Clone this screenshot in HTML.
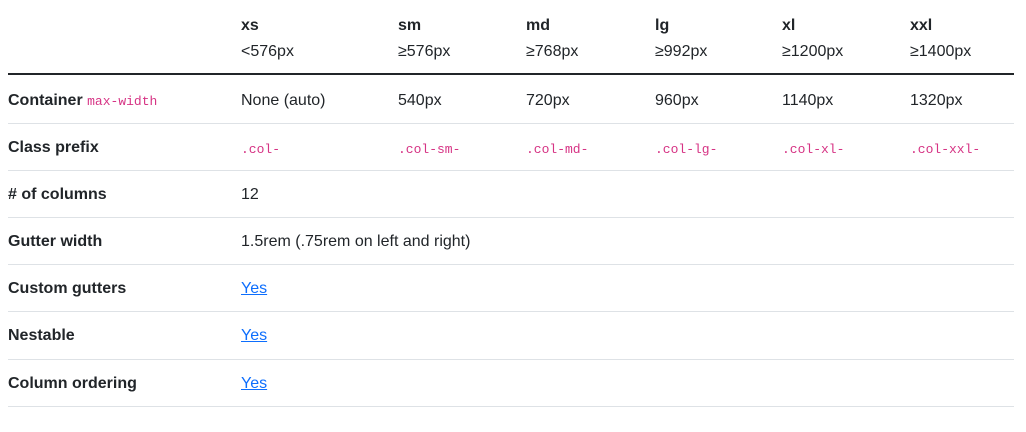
<!DOCTYPE html><html><head><style>
body{margin:0;width:1026px;height:432px;background:#fff;font-family:"Liberation Sans",sans-serif;color:#212529;font-size:16px;position:relative;overflow:hidden}
.t{position:absolute;white-space:nowrap;line-height:20px}
.b{font-weight:bold}
code{font-family:"Liberation Mono",monospace;color:#d63384;font-size:13px}
a{color:#0d6efd;text-decoration:underline}
.l{position:absolute;left:8px;width:1006px;height:1px;background:#dee2e6}
</style></head><body>
<div style="position:absolute;left:8px;top:73px;width:1006px;height:2px;background:#212529"></div>
<div class="l" style="top:123px"></div><div class="l" style="top:170px"></div><div class="l" style="top:217px"></div><div class="l" style="top:264px"></div><div class="l" style="top:311px"></div><div class="l" style="top:359px"></div><div class="l" style="top:406px"></div>

<div class="t b" style="left:241px;top:16px">xs</div><div class="t" style="left:241px;top:42px">&lt;576px</div>
<div class="t b" style="left:398px;top:16px">sm</div><div class="t" style="left:398px;top:42px">≥576px</div>
<div class="t b" style="left:526px;top:16px">md</div><div class="t" style="left:526px;top:42px">≥768px</div>
<div class="t b" style="left:655px;top:16px">lg</div><div class="t" style="left:655px;top:42px">≥992px</div>
<div class="t b" style="left:782px;top:16px">xl</div><div class="t" style="left:782px;top:42px">≥1200px</div>
<div class="t b" style="left:910px;top:16px">xxl</div><div class="t" style="left:910px;top:42px">≥1400px</div>

<div class="t" style="left:8px;top:91px"><b>Container</b> <code>max-width</code></div>
<div class="t" style="left:241px;top:91px">None (auto)</div>
<div class="t" style="left:398px;top:91px">540px</div>
<div class="t" style="left:526px;top:91px">720px</div>
<div class="t" style="left:655px;top:91px">960px</div>
<div class="t" style="left:782px;top:91px">1140px</div>
<div class="t" style="left:910px;top:91px">1320px</div>

<div class="t b" style="left:8px;top:138px">Class prefix</div>
<div class="t" style="left:241px;top:139px"><code>.col-</code></div>
<div class="t" style="left:398px;top:139px"><code>.col-sm-</code></div>
<div class="t" style="left:526px;top:139px"><code>.col-md-</code></div>
<div class="t" style="left:655px;top:139px"><code>.col-lg-</code></div>
<div class="t" style="left:782px;top:139px"><code>.col-xl-</code></div>
<div class="t" style="left:910px;top:139px"><code>.col-xxl-</code></div>

<div class="t b" style="left:8px;top:185px"># of columns</div><div class="t" style="left:241px;top:185px">12</div>
<div class="t b" style="left:8px;top:232px">Gutter width</div><div class="t" style="left:241px;top:232px">1.5rem (.75rem on left and right)</div>
<div class="t b" style="left:8px;top:279px">Custom gutters</div><div class="t" style="left:241px;top:279px"><a>Yes</a></div>
<div class="t b" style="left:8px;top:326px">Nestable</div><div class="t" style="left:241px;top:326px"><a>Yes</a></div>
<div class="t b" style="left:8px;top:374px">Column ordering</div><div class="t" style="left:241px;top:374px"><a>Yes</a></div>
</body></html>
